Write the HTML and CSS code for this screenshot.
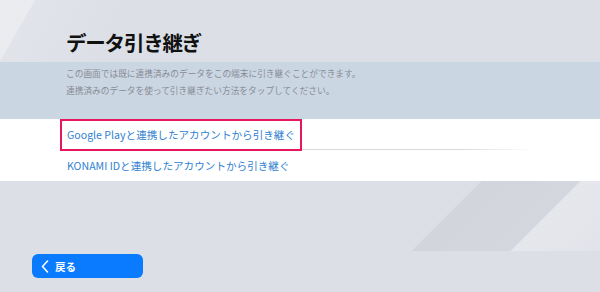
FILE: index.html
```html
<!DOCTYPE html>
<html lang="ja">
<head>
    <meta charset="UTF-8">
    <meta name="viewport" content="width=device-width, initial-scale=1.0">
    <title>データ引き継ぎ</title>
    <link rel="stylesheet" href="styles.css">
</head>
<body>
    <div class="page">
        <h1 class="title">データ引き継ぎ</h1>

        <div class="band">
            <p>この画面では既に連携済みのデータをこの端末に引き継ぐことができます。</p>
            <p>連携済みのデータを使って引き継ぎたい方法をタップしてください。</p>
        </div>

        <ul class="list">
            <li class="row"><a class="link selected" href="#">Google Playと連携したアカウントから引き継ぐ</a></li>
            <li class="row"><a class="link" href="#">KONAMI IDと連携したアカウントから引き継ぐ</a></li>
        </ul>

        <div class="footer">
            <button class="back">
                <svg width="8" height="13" viewBox="0 0 8 13"><path d="M6.5 1 L1.5 6.5 L6.5 12" fill="none" stroke="#fff" stroke-width="1.6" stroke-linecap="round" stroke-linejoin="round"/></svg>
                <span>戻る</span>
            </button>
        </div>
    </div>
</body>
</html>
```

FILE: styles.css
```css
body {
    margin: 0;
    font-family: 'Noto Sans CJK JP', 'Noto Sans', sans-serif;
    background-color: #dcdfe6;
    /* faint diagonal streaks: top-left corner and lower-right band */
    background-image:
        linear-gradient(120deg, rgba(255,255,255,0.4) 0, rgba(255,255,255,0.4) 30px, rgba(255,255,255,0.15) 31px, rgba(255,255,255,0) 120px),
        linear-gradient(135deg, transparent 340px, rgba(203,206,214,0.6) 341px, rgba(206,209,217,0.6) 410px, rgba(236,237,241,0.6) 411px, rgba(236,237,241,0.3) 473px);
    background-size: 220px 62px, 600px 70px;
    background-position: 0 0, 0 181px;
    background-repeat: no-repeat;
    color: #333;
}

.page {
    display: flex;
    flex-direction: column;
    height: 292px;
}

.title {
    margin: 0;
    padding: 29px 0 0 66px;
    height: 33px;
    font-size: 20.5px;
    line-height: 26px;
    font-weight: 700;
    color: #111;
    letter-spacing: -1.2px;
}

.band {
    background: #cbd6e3;
    padding: 3px 66px 0;
    height: 54px;
}

.band p {
    margin: 0;
    font-size: 8.7px;
    line-height: 17px;
    color: #878c95;
}

.list {
    list-style: none;
    margin: 0;
    padding: 0 0 0 60px;
    background: #fff;
}

.row {
    width: 473px;
    height: 31px;
    display: flex;
    align-items: center;
}

.row:first-child {
    background: linear-gradient(to right, #d8dadf 0, #d8dadf 85%, rgba(216,218,223,0) 100%) no-repeat left bottom / 100% 1px;
}

.link {
    display: block;
    padding: 0 5px;
    font-size: 10.6px;
    line-height: 28px;
    color: #2f7fd0;
    text-decoration: none;
    border: 2px solid transparent;
}

.link.selected {
    border-color: #e8175d;
    height: 28px;
}

.footer {
    flex: 1;
    display: flex;
    align-items: flex-end;
    padding: 0 0 14px 32px;
}

.back {
    width: 111px;
    height: 24px;
    display: flex;
    align-items: center;
    gap: 6px;
    padding: 0 0 0 9px;
    border: none;
    border-radius: 6px;
    background: #0a7bff;
    color: #fff;
    font-family: inherit;
    font-size: 10.5px;
    font-weight: 700;
    cursor: pointer;
}
```
